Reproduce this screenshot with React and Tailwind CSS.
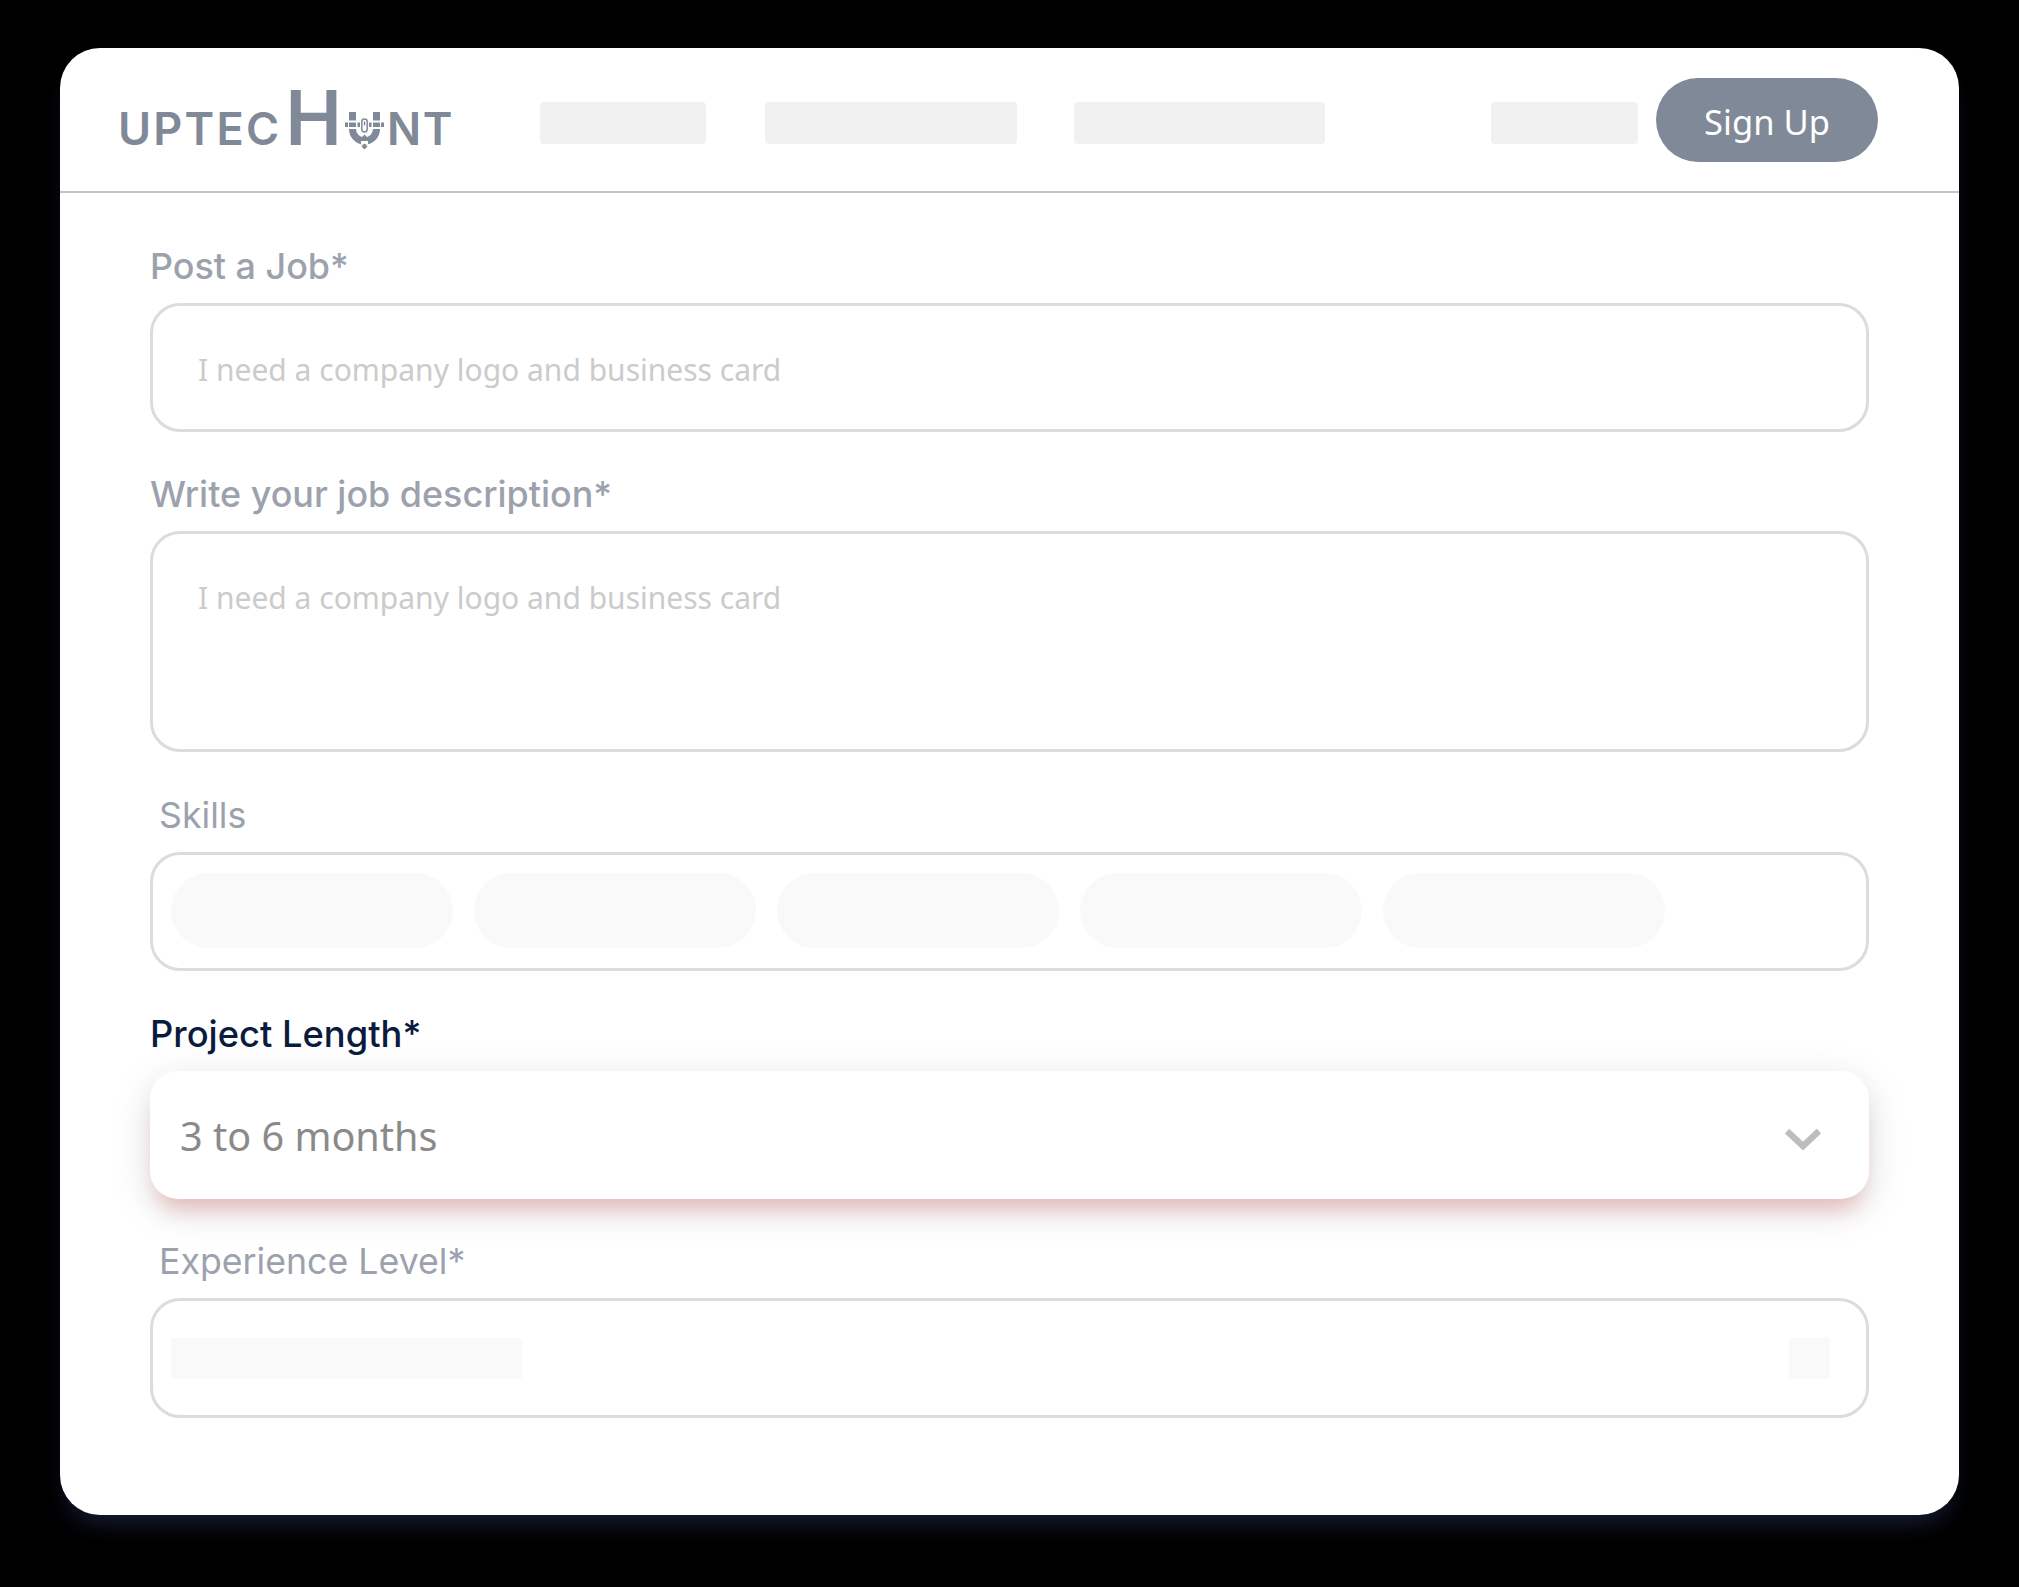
const sans = "font-['Inter',sans-serif]";
const noto = "font-['Noto_Sans',sans-serif]";

function Logo() {
  return (
    <div className="flex items-end ml-[58px] h-[55px] text-[#808997] font-['Inter',sans-serif] font-semibold leading-none">
      <span className="text-[45px] tracking-[2.2px] leading-[33px] h-[33px]">UPTEC</span>
      <span className="text-[76px] ml-[4px] leading-[55px] h-[55px]">H</span>
      <svg width="39" height="38" viewBox="0 0 39 38" className="-mb-[5px] ml-[3px] shrink-0" fill="#808997">
        <path d="M4 0h7v17a8.500 8.500 0 0 0 17 0V0h7v17a15.500 15.500 0 0 1-31 0z" />
        <rect x="4" y="8.500" width="7" height="2" fill="#fff" />
        <rect x="4" y="15" width="7" height="2" fill="#fff" />
        <rect x="28" y="8.500" width="7" height="2" fill="#fff" />
        <rect x="28" y="15" width="7" height="2" fill="#fff" />
        <rect x="0" y="10.500" width="3" height="4.500" />
        <rect x="3" y="10.500" width="1" height="4.500" fill="#fff" />
        <rect x="11" y="10.500" width="1.500" height="4.500" fill="#fff" />
        <rect x="12.500" y="10.500" width="2.500" height="4.500" />
        <rect x="24" y="10.500" width="2.500" height="4.500" />
        <rect x="36" y="10.500" width="3" height="4.500" />
        <rect x="16.800" y="7" width="5.400" height="13" rx="2.700" fill="none" stroke="#808997" strokeWidth="1.500" />
        <rect x="18.800" y="9.500" width="1.400" height="4" />
        <path d="M19.500 22.500l3 3-3 3-3-3z" />
        <rect x="16" y="29" width="7" height="3" fill="#fff" />
        <path d="M19.500 31.500l3 3-3 3-3-3z" />
      </svg>
      <span className="text-[45px] tracking-[1.6px] leading-[33px] h-[33px] ml-[3px]">NT</span>
    </div>
  );
}

function Label({ children, kind }) {
  const tone =
    kind === "dark"
      ? "text-[36.300px] font-medium text-[#0b1b3d]"
      : kind === "inset"
        ? "text-[35.700px] text-[#9ca2ad] pl-[9px]"
        : "text-[35.900px] font-[450] text-[#9ca2ad]";
  return <label className={`block h-[44px] leading-[44px] mb-[15px] ${sans} ${tone}`}>{children}</label>;
}

function Box({ className, children }) {
  return (
    <div className={`border-[3px] border-[#dcdcdc] rounded-[30px] bg-white ${className}`}>{children}</div>
  );
}

function Placeholder() {
  return (
    <span className={`${noto} text-[30px] leading-[40px] text-[#cbcbcb]`}>I need a company logo and business card</span>
  );
}

export default function App() {
  return (
    <div className="w-[2019px] h-[1587px] bg-black pt-[48px] pl-[60px] overflow-hidden">
      <div className="w-[1899px] h-[1467px] bg-white rounded-[40px] shadow-[0_16px_22px_-8px_rgba(40,52,100,0.55)]">
        <header className="h-[145px] border-b-2 border-[#c4c4c4] flex items-start">
          <div className="mt-[42px] w-[480px] shrink-0"><Logo /></div>
          <nav className="flex mt-[54px] gap-[57px]">
            <div className="w-[166px] h-[42px] mr-[2px] rounded-[4px] bg-[#f1f1f1] blur-[0.5px]" />
            <div className="w-[252px] h-[42px] rounded-[4px] bg-[#f1f1f1] blur-[0.5px]" />
            <div className="w-[251px] h-[42px] rounded-[4px] bg-[#f1f1f1] blur-[0.5px]" />
          </nav>
          <div className="ml-auto mr-[81px] mt-[30px] flex items-center gap-[18px]">
            <div className="w-[147px] h-[42px] mt-[5px] rounded-[4px] bg-[#f1f1f1] blur-[0.5px]" />
            <button className={`w-[222px] h-[84px] pt-[3px] rounded-full bg-[#808997] text-white text-[34.500px] ${noto}`}>Sign Up</button>
          </div>
        </header>

        <main className="px-[90px] pt-[51px] flex flex-col">
          <section>
            <Label>Post a Job*</Label>
            <Box className="h-[129px] pl-[45px] pt-[44px]"><Placeholder /></Box>
          </section>
          <section className="mt-[40px]">
            <Label>Write your job description*</Label>
            <Box className="h-[221px] pl-[45px] pt-[44px]"><Placeholder /></Box>
          </section>
          <section className="mt-[41px]">
            <Label kind="inset">Skills</Label>
            <Box className="h-[119px] pl-[18px] pt-[18px] flex items-start gap-[21px]">
              {[0, 1, 2, 3, 4].map((i) => (
                <div key={i} className="w-[282px] h-[75px] rounded-full bg-[#f9f9f9]" />
              ))}
            </Box>
          </section>
          <section className="mt-[41px]">
            <Label kind="dark">Project Length*</Label>
            <div className="h-[128px] rounded-[28px] bg-white pl-[30px] pr-[48px] flex items-center justify-between shadow-[0_18px_20px_-8px_rgba(215,110,110,0.36),0_10px_40px_rgba(0,0,0,0.13)]">
              <span className={`${noto} text-[39.600px] pt-[4px] text-[#8a8a8a]`}>3 to 6 months</span>
              <svg width="36" height="23" viewBox="0 0 36 23" fill="none" stroke="#bdbdbd" strokeWidth="6.500" className="mt-[9px]">
                <path d="M2 3l16 15L34 3" />
              </svg>
            </div>
          </section>
          <section className="mt-[40px]">
            <Label kind="inset">Experience Level*</Label>
            <Box className="h-[120px] pl-[18px] pr-[36px] flex items-center justify-between">
              <div className="w-[351px] h-[41px] rounded-[3px] bg-[#f9f9f9]" />
              <div className="w-[41px] h-[41px] rounded-[3px] bg-[#f9f9f9]" />
            </Box>
          </section>
        </main>
      </div>
    </div>
  );
}
